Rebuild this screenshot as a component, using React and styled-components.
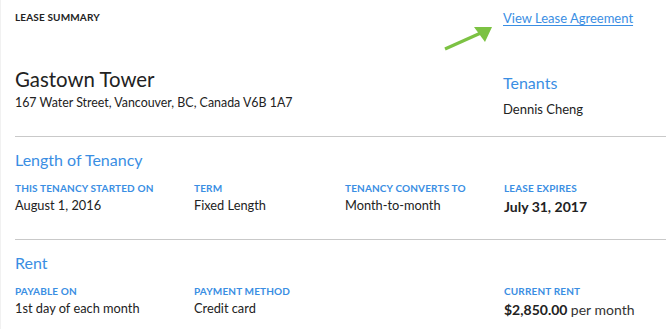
import React from "react";
import styled, { createGlobalStyle } from "styled-components";

const Global = createGlobalStyle`
  html, body { margin: 0; padding: 0; background: #fff; }
  body { font-family: Lato, "Open Sans", Arial, sans-serif; color: #222; }
  * { box-sizing: border-box; }
`;

const BLUE = "#3a8ee3";

const Page = styled.div`
  position: relative;
  width: 671px;
  height: 329px;
  padding: 0 5px 0 14px;
  border-left: 1px solid #f1f1f1;
  overflow: hidden;
`;

const Header = styled.section`
  display: grid;
  grid-template-columns: 488px 1fr;
  padding-bottom: 18px;
  border-bottom: 1px solid #c9c9c9;
`;

const Eyebrow = styled.div`
  font-size: 10px;
  font-weight: 700;
  letter-spacing: 0.15px;
  line-height: 14px;
  color: #222;
  padding-top: 10px;
  height: 66px;
`;

const LinkCell = styled.div`
  padding-top: 9px;
  height: 60px;
  line-height: 16px;
`;

const Link = styled.a`
  font-size: 13px;
  color: ${BLUE};
  text-decoration: underline;
  text-underline-offset: 2px;
  cursor: pointer;
`;

const Title = styled.h1`
  margin: 0;
  font-size: 20.4px;
  font-weight: 400;
  line-height: 26px;
  color: #222;
`;

const Address = styled.div`
  font-size: 12.4px;
  line-height: 18px;
  margin-top: 2px;
  color: #222;
`;

const SideHeading = styled.h2`
  margin: 13px 0 0;
  font-size: 16px;
  font-weight: 400;
  color: ${BLUE};
  line-height: 20px;
`;

const SideText = styled.div`
  font-size: 13px;
  line-height: 18px;
  margin-top: 7px;
`;

const Section = styled.section`
  padding: 13px 0 23px;
  border-bottom: ${(p) => (p.$last ? "none" : "1px solid #c9c9c9")};
`;

const SectionTitle = styled.h2`
  margin: 0 0 12px;
  font-size: 16px;
  font-weight: 400;
  line-height: 20px;
  color: ${BLUE};
`;

const Fields = styled.div`
  display: grid;
  grid-template-columns: 179px 151px 159px 1fr;
`;

const Field = styled.div`
  display: flex;
  flex-direction: column;
`;

const Label = styled.div`
  font-size: 10px;
  font-weight: 700;
  letter-spacing: 0.15px;
  color: ${BLUE};
  line-height: 12px;
  text-transform: uppercase;
`;

const Value = styled.div`
  margin-top: ${(p) => (p.$big ? "4px" : "2px")};
  font-size: ${(p) => (p.$big ? "14px" : "12.8px")};
  font-weight: ${(p) => (p.$big ? 700 : 400)};
  line-height: 18px;
  color: #222;
`;

const Unit = styled.span`
  font-weight: 400;
  color: #333;
`;

const Arrow = styled.svg`
  position: absolute;
  left: 0;
  top: 0;
  pointer-events: none;
`;

export default function App() {
  return (
    <>
      <Global />
      <Page>
        <Header>
          <div>
            <Eyebrow>LEASE SUMMARY</Eyebrow>
            <Title>Gastown Tower</Title>
            <Address>167 Water Street, Vancouver, BC, Canada V6B 1A7</Address>
          </div>
          <div>
            <LinkCell>
              <Link>View Lease Agreement</Link>
            </LinkCell>
            <SideHeading>Tenants</SideHeading>
            <SideText>Dennis Cheng</SideText>
          </div>
        </Header>

        <Section>
          <SectionTitle>Length of Tenancy</SectionTitle>
          <Fields>
            <Field>
              <Label>This tenancy started on</Label>
              <Value>August 1, 2016</Value>
            </Field>
            <Field>
              <Label>Term</Label>
              <Value>Fixed Length</Value>
            </Field>
            <Field>
              <Label>Tenancy converts to</Label>
              <Value>Month-to-month</Value>
            </Field>
            <Field>
              <Label>Lease expires</Label>
              <Value $big>July 31, 2017</Value>
            </Field>
          </Fields>
        </Section>

        <Section $last>
          <SectionTitle>Rent</SectionTitle>
          <Fields>
            <Field>
              <Label>Payable on</Label>
              <Value>1st day of each month</Value>
            </Field>
            <Field>
              <Label>Payment method</Label>
              <Value>Credit card</Value>
            </Field>
            <Field />
            <Field>
              <Label>Current rent</Label>
              <Value $big>
                $2,850.00 <Unit>per month</Unit>
              </Value>
            </Field>
          </Fields>
        </Section>

        <Arrow width="671" height="329" viewBox="0 0 671 329">
          <line x1="444" y1="49" x2="482" y2="32" stroke="#7cc243" strokeWidth="3.2" strokeLinecap="butt" />
          <polygon points="491,27 473,27 484,42" fill="#7cc243" />
        </Arrow>
      </Page>
    </>
  );
}
